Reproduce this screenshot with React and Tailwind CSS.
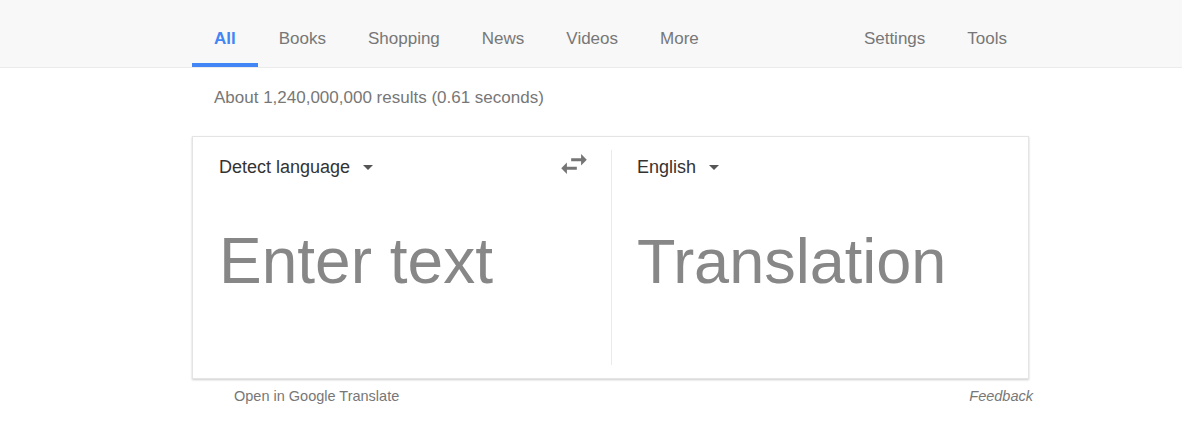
const tabs = ["All", "Books", "Shopping", "News", "Videos", "More"];

const Caret = () => (
    <span className="ml-[13px] inline-block w-0 h-0 border-l-[5px] border-r-[5px] border-t-[5px] border-l-transparent border-r-transparent border-t-[#555]" />
);

const SwapIcon = () => (
    <svg width="34" height="34" viewBox="0 0 24 24" fill="#757575">
        <path d="M6.99 11L3 15l3.99 4v-3H14v-2H6.99v-3zM21 9l-3.99-4v3H10v2h7.01v3L21 9z" />
    </svg>
);

const App = () => {
    return (
        <div className="w-[1182px] h-[442px] bg-white font-['Liberation_Sans',Arial,sans-serif]">
            {/* top nav */}
            <div className="h-[68px] bg-[#f8f8f8] border-b border-[#ebebeb] flex flex-row pl-[192px]">
                <div className="flex flex-row">
                    {tabs.map((tab, i) => (
                        <div key={tab} className={`h-full flex items-center text-[17px] ${i === 0 ? 'px-[22px] pt-[15px] text-[#4285f4] font-bold border-b-[4px] border-[#4285f4]' : 'px-[21px] pt-[11px] text-[#777]'}`}>
                            {tab}
                        </div>
                    ))}
                </div>
                <div className="flex flex-row ml-auto mr-[155px]">
                    <div className="h-full flex items-center px-[22px] pt-[11px] text-[17px] text-[#777]">Settings</div>
                    <div className="h-full flex items-center px-[20px] pt-[11px] text-[17px] text-[#777]">Tools</div>
                </div>
            </div>

            <div className="pl-[192px]">
                <p className="pl-[22px] pt-[18px] text-[17px] text-[#777] leading-[24px]">About 1,240,000,000 results (0.61 seconds)</p>

                {/* translate card */}
                <div className="mt-[26px] w-[837px] h-[243px] border border-[#e4e4e4] shadow-[0_1px_2px_rgba(0,0,0,0.2)] flex flex-row">
                    <div className="w-[418px] flex flex-col pl-[26px] pt-[19px] relative">
                        <div className="flex flex-row items-center text-[18px] text-[#333] h-[22px]">
                            <span>Detect language</span>
                            <Caret />
                        </div>
                        <div className="absolute left-[364px] top-[10px]">
                            <SwapIcon />
                        </div>
                        <div className="mt-[51px] text-[64px] leading-[64px] text-[#878787]">Enter text</div>
                    </div>
                    <div className="w-px bg-[#eaeaea] my-[13px]" />
                    <div className="flex-1 flex flex-col pl-[25px] pt-[19px]">
                        <div className="flex flex-row items-center text-[18px] text-[#333] h-[22px]">
                            <span>English</span>
                            <Caret />
                        </div>
                        <div className="mt-[51px] text-[63px] leading-[64px] text-[#878787]">Translation</div>
                    </div>
                </div>

                <div className="w-[841px] flex flex-row justify-between mt-[8px] text-[14.5px] text-[#777] leading-[18px]">
                    <span className="pl-[42px]">Open in Google Translate</span>
                    <span className="italic">Feedback</span>
                </div>
            </div>
        </div>
    );
};

export default App;
